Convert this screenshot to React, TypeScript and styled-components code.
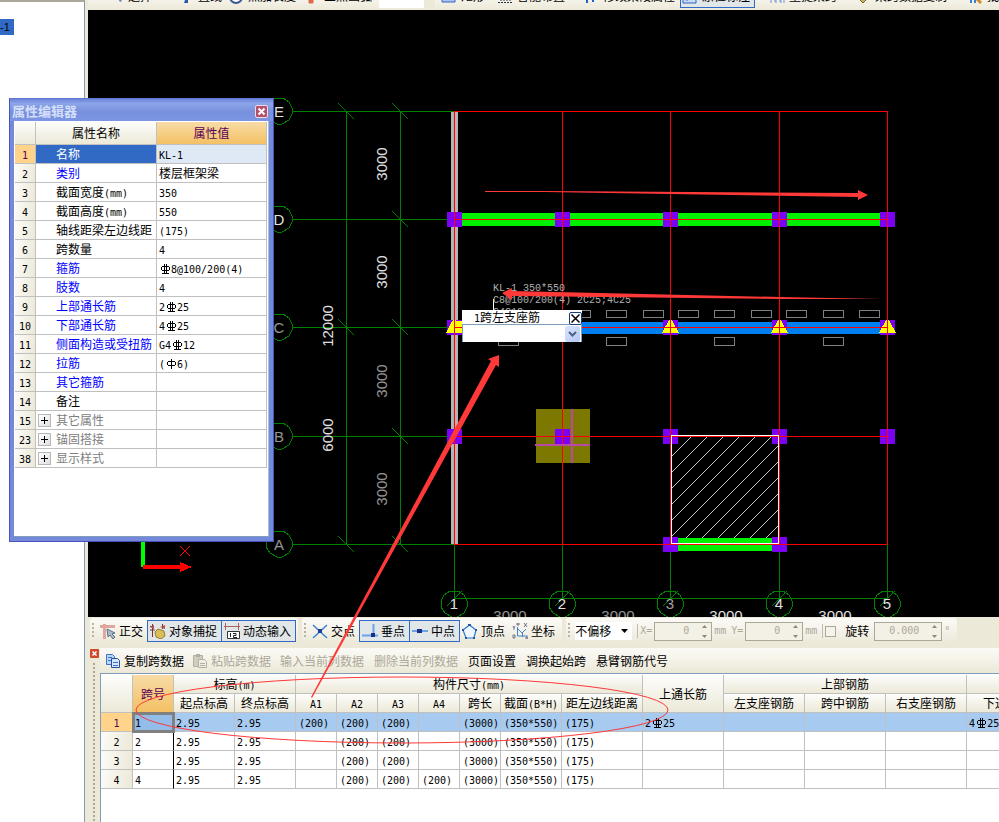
import React from 'react';
import styled, { createGlobalStyle, css } from 'styled-components';

const GlobalStyle = createGlobalStyle`
  * { box-sizing: border-box; }
  body {
    margin: 0;
    background: #ece9d8;
    color: #000;
    font: 12px/18px "Noto Sans CJK SC", "Liberation Sans", sans-serif;
  }
  button, input, select { font: inherit; color: inherit; margin: 0; }
`;

const LINE = '#c0c0c0';
const CHROME = 'linear-gradient(#fbfaf6, #f4f2e8 50%, #ebe8d7)';

/* ---------- text helpers ---------- */

const Latin = styled.span`
  font-family: "DejaVu Sans Mono", monospace;
  font-size: 10px;
  line-height: 0;
  white-space: pre;
`;

const Glyph = styled.svg`
  width: 12px;
  height: 12px;
  vertical-align: -2px;
  fill: none;
  stroke: currentColor;
  shape-rendering: crispEdges;
`;

const Rebar = ({ grade }: { grade: 'A' | 'C' }) => (
  <Glyph viewBox="0 0 12 12" role="img" aria-label={grade === 'C' ? 'HRB400' : 'HPB300'}>
    {grade === 'C' ? (
      <path d="M3 3.500h7M3 7.500h7M2.500 4v3M10.500 4v3M5.500 1v10M7.500 1v10M3 10.500h7" />
    ) : (
      <path d="M3 3.500h7M3 7.500h7M2.500 4v3M10.500 4v3M6.500 1v10" />
    )}
  </Glyph>
);

/* "#" marks a grade C bar, "~" a grade A bar. */
const Txt = ({ children }: { children: string }) => (
  <>
    {(children.match(/[#~]|[\x20-\x22\x24-\x7d]+|[^\x20-\x7e]+/g) || []).map((part, i) => {
      if (part === '#') return <Rebar key={i} grade="C" />;
      if (part === '~') return <Rebar key={i} grade="A" />;
      return /^[\x20-\x7e]/.test(part) ? <Latin key={i}>{part}</Latin> : <span key={i}>{part}</span>;
    })}
  </>
);

/* ---------- page frame ---------- */

const Page = styled.div`
  position: relative;
  display: flex;
  min-height: 100vh;
  overflow: hidden;
`;

const TreePane = styled.aside`
  flex: 0 0 85px;
  padding-top: 17px;
  background: #fff;
  border-top: 2px solid #aca899;
  border-right: 1px solid #7f9db9;
`;

const TreeItem = styled.button`
  display: block;
  width: 14px;
  height: 16px;
  padding: 0;
  border: 0;
  background: #316ac5;
  font: 11px/16px "Liberation Sans", sans-serif;
  text-align: left;
`;

const Main = styled.main`
  display: flex;
  flex: 1;
  flex-direction: column;
  min-width: 0;
  margin-left: 3px;
`;

/* ---------- top tool bar ---------- */

const TopBar = styled.div`
  display: flex;
  align-items: flex-end;
  height: 10px;
  padding: 0 0 2px 18px;
  overflow: hidden;
  background: linear-gradient(#f5f3e9, #ece9d8);
`;

const TopButton = styled.button<{ $w: number; $on?: boolean }>`
  display: flex;
  flex: 0 0 ${p => p.$w}px;
  align-items: center;
  gap: 4px;
  height: 20px;
  margin-right: ${p => (p.$on ? 12 : 0)}px;
  padding: 0 0 4px 1px;
  border: 1px solid ${p => (p.$on ? '#316ac5' : 'transparent')};
  background: ${p => (p.$on ? '#e1e6e8' : 'transparent')};
  white-space: nowrap;
`;

const TopField = styled.input`
  flex: 0 0 56px;
  width: 56px;
  height: 20px;
  margin-right: 4px;
  border: 0;
  border-right: 11px solid #ece9d8;
  background: #fff;
`;

const SmallIcon = styled.svg`
  flex: none;
  width: 16px;
  height: 16px;
  fill: none;
`;

const topItems = [
  { label: '选择', w: 70, icon: <path d="M6 3v9l3-3 3 5 2-1-3-4h4z" fill="#6f86b5" /> },
  { label: '直线', w: 50, icon: <path d="M5 3h8l-3 6v6H6l2-6z" fill="#2b58b0" /> },
  { label: '点加长度', w: 76, icon: <><circle cx="8" cy="9" r="6" fill="#fff" stroke="#3b5a92" strokeWidth="2" /><path d="M8 5v7" stroke="#222" /></> },
  { label: '三点画弧', w: 77, icon: <path d="M6 8v3M5 12h4v3H5z" stroke="#e0674c" fill="#e0674c" /> },
];

const topItemsAfter = [
  { label: '矩形', w: 56, icon: <path d="M1 3h13v11H1z" fill="#a9c4f5" stroke="#3a5fcd" /> },
  { label: '智能布置', w: 86, icon: <path d="M2 3h12v9H2zM1 14.500h14" fill="#b5d0f0" stroke="#234" strokeDasharray="2 1" /> },
  { label: '修改梁段属性', w: 99, icon: <path d="M4 2v13M4 10h7M10 3v11" stroke="#1f62c4" strokeWidth="2" /> },
  { label: '原位标注', w: 75, on: true, icon: <path d="M1 2h13v13H1zM5 6v7M9 9h4" fill="#c6dbf7" stroke="#3566b8" /> },
  { label: '重提梁跨', w: 86, icon: <path d="M2 15V5h4v9M7 15V5h4v9M12 15V5h3v10" stroke="#6c93d6" /> },
  { label: '梁跨数据复制', w: 112, icon: <path d="M3 10l5 5 5-5-5-6z" fill="#c6b35d" stroke="#77692c" /> },
  { label: '批量', w: 60, icon: <><path d="M1 11h10M4 8v7M8 8v7" stroke="#3a80d0" strokeWidth="2" /><path d="M9 10l5 5" stroke="#d68a30" strokeWidth="3" /></> },
];

/* ---------- drawing canvas ---------- */

const CanvasArea = styled.section`
  position: relative;
  overflow: hidden;
  background: #000;
`;

const Drawing = styled.svg`
  display: block;
  width: 911px;
  height: 607px;
  shape-rendering: crispEdges;
  fill: none;
  text {
    fill: #e0e0e0;
    font-family: "Liberation Sans", sans-serif;
    font-size: 15px;
    text-anchor: middle;
  }
`;

const axisX = [454, 562, 670, 779, 887];
const axisY = [111, 219, 327, 436, 544];
const letters = ['E', 'D', 'C', 'B', 'A'];
const columns: [number, number][] = [
  [454, 219], [562, 219], [670, 219], [779, 219], [887, 219],
  [454, 327], [670, 327], [779, 327], [887, 327],
  [454, 436], [562, 436], [670, 436], [779, 436], [887, 436],
  [670, 544], [779, 544],
];
const hatch = Array.from({ length: 12 }, (_, k) => {
  const s = 1128 + 16 * k;
  const y1 = Math.min(538, s - 671);
  const y2 = Math.max(437, s - 778);
  return `M${s - y1} ${y1}L${s - y2} ${y2}`;
}).join('');

const ring = (cx: number, cy: number) =>
  `M${cx - 4} ${cy - 13}h8l6 4 3 6v6l-3 6-7 4h-5l-7-4-4-6v-6l3-6z`;

const Plan = () => (
  <Drawing viewBox="88 10 911 607" role="img" aria-label="梁平面图">
    <g stroke="#008000">
      {axisY.map(y => <path key={y} d={`M292 ${y + 0.5}H454`} />)}
      <path d="M346.500 111V544M400.500 111V544M454 598.500H887" />
      {axisX.map(x => <path key={x} d={`M${x + 0.5} 544V598`} />)}
      {[111, 327, 544].map(y => <path key={y} d={`M338 ${y - 8}l16 16`} />)}
      {axisY.map(y => <path key={y} d={`M392 ${y - 8}l16 16`} />)}
      {axisX.map(x => <path key={x} d={`M${x - 7} 606l15-15`} />)}
      {axisY.map(y => <path key={y} d={ring(279, y)} />)}
      {axisX.map(x => <path key={x} d={ring(x, 604)} />)}
    </g>
    <rect x="451" y="112" width="7" height="432" fill="#b4b4b4" />
    <rect x="454" y="213" width="433" height="13" fill="#00f000" />
    <rect x="454" y="322" width="433" height="12" fill="#0080f0" />
    <rect x="678" y="538" width="94" height="13" fill="#00f000" />
    <rect x="536" y="409" width="54" height="54" fill="#7c7800" />
    <g fill="#7c00f4">
      {columns.map(([x, y]) => <rect key={`${x}-${y}`} x={x - 7} y={y - 7} width="15" height="15" />)}
    </g>
    <path d={hatch} stroke="#c8c8c8" />
    <g stroke="#808080">
      {[462, 570, 606, 643, 678, 714, 751, 786, 823, 859].map(x => (
        <rect key={x} x={x + 0.5} y="310.500" width="20" height="7" />
      ))}
      {[498, 606, 714, 823].map(x => <rect key={x} x={x + 0.5} y="337.500" width="20" height="8" />)}
    </g>
    <g fill="#ff0">
      {axisX.filter(x => x !== 562).map(x => <path key={x} d={`M${x - 1} 320h3l7 13h-17z`} />)}
      <path d="M446 333l6-12h12v12z" />
    </g>
    <g stroke="#f00">
      {axisX.map(x => <path key={x} d={`M${x + 0.5} 111V544`} />)}
      {axisY.map(y => <path key={y} d={`M454 ${y + 0.5}H887`} />)}
    </g>
    <path d="M671.500 435.500H778.500V543.500H671.500z" stroke="#fff" />
    <path d="M571 409h2v54h-2zM535 444h55v2h-55z" fill="#b84aa4" />
    <path d="M141 500h4v67h-4z" fill="#0f0" />
    <path d="M143 565h37v-3l12 5-12 5v-3h-37z" fill="#f00" />
    <path d="M180 546l10 10M190 546l-10 10" stroke="#f00" shapeRendering="auto" />
    {letters.map((l, i) => (
      <text key={l} x="279" y={axisY[i] + 6} opacity={i > 1 ? 0.65 : 1}>{l}</text>
    ))}
    {axisX.map((x, i) => <text key={x} x={x} y="609" opacity={i === 2 ? 0.7 : 1}>{i + 1}</text>)}
    {axisX.slice(0, 4).map((x, i) => (
      <text key={x} x={x + 56} y="621" opacity={i < 2 ? 0.65 : 1}>3000</text>
    ))}
    {[164, 272, 381, 489].map((y, i) => (
      <text key={y} transform={`translate(387 ${y}) rotate(-90)`} opacity={i > 1 ? 0.65 : 1}>3000</text>
    ))}
    <text transform="translate(333 326) rotate(-90)">12000</text>
    <text transform="translate(333 435) rotate(-90)">6000</text>
    <path d="M493.500 299v14" stroke="#fff" />
  </Drawing>
);

const BeamNote = styled.div`
  position: absolute;
  top: 273px;
  left: 405px;
  color: #b0b0b0;
  font: 10px/12px "Liberation Mono", monospace;
  white-space: pre;
`;

const SupportPopup = styled.div`
  position: absolute;
  top: 300px;
  left: 374px;
  width: 120px;
  height: 32px;
  background: #fff;
`;

const PopupHead = styled.div`
  display: flex;
  align-items: center;
  justify-content: space-between;
  height: 14px;
  padding-left: 12px;
  line-height: 14px;
`;

const PopupClose = styled.button`
  width: 13px;
  height: 13px;
  margin-top: 2px;
  padding: 0;
  border: 1px solid #1c3c78;
  border-radius: 2px;
  background: #fff;
  svg { display: block; width: 11px; height: 11px; }
`;

const PopupCombo = styled.div`
  display: flex;
  align-items: stretch;
  height: 18px;
  padding: 1px 1px 0 0;
  border: 1px solid #7f9db9;
  border-bottom: 0;
`;

const PopupSelect = styled.select`
  flex: 1;
  min-width: 0;
  border: 0;
  background: #fff;
  appearance: none;
`;

const ComboArrow = styled.svg`
  flex: none;
  width: 15px;
  height: 16px;
  border-radius: 2px;
  background: linear-gradient(135deg, #dbe5fd, #b4c8f6);
`;

/* ---------- property editor ---------- */

const PropWindow = styled.section`
  position: absolute;
  top: 98px;
  left: 9px;
  display: flex;
  flex-direction: column;
  width: 265px;
  height: 444px;
  padding: 0 4px 4px;
  border: 1px solid #4a54b8;
  border-top-color: #6078d0;
  background: #7488dc;
`;

const PropTitle = styled.header`
  display: flex;
  align-items: center;
  justify-content: space-between;
  height: 22px;
  margin: 0 -4px;
  padding: 2px 5px 0 2px;
  background: linear-gradient(#6a84d8, #8ca4e8 20%, #7890dc 60%, #7c96e4);
  color: #d4dffa;
  font-size: 13px;
  font-weight: 700;
`;

const PropClose = styled.button`
  width: 13px;
  height: 13px;
  padding: 0;
  border: 1px solid #f0d8e4;
  border-radius: 2px;
  background: #b4506c;
  svg { display: block; width: 11px; height: 11px; }
`;

const PropBody = styled.div`
  flex: 1;
  padding: 1px 1px 0;
  border-right: 1px solid #a9c0dc;
  border-bottom: 1px solid #7f9db9;
  background: #fff;
`;

const GridTable = styled.table`
  border-collapse: separate;
  border-spacing: 0;
  table-layout: fixed;
`;

const PropTable = styled(GridTable)`
  width: 252px;
`;

const cell = css`
  height: 19px;
  padding: 0;
  border-right: 1px solid ${LINE};
  border-bottom: 1px solid ${LINE};
  line-height: 16px;
  font-weight: 400;
  white-space: nowrap;
`;

const HeadCell = styled.th<{ $hot?: boolean; $tall?: boolean }>`
  ${cell}
  height: ${p => (p.$tall ? 23 : 19)}px;
  background: ${p => (p.$hot ? 'linear-gradient(#f7dca6, #f4c064)' : 'linear-gradient(#fdfdfb, #ece9d8)')};
  color: ${p => (p.$hot ? '#5a0058' : '#000')};
  text-align: center;
`;

const RowHead = styled.th<{ $hot?: boolean }>`
  ${cell}
  background: ${p => (p.$hot ? '#ffd48a' : 'linear-gradient(100deg, #fcfbf7, #ece9d8)')};
  color: ${p => (p.$hot ? '#5a0058' : '#000')};
  text-align: center;
`;

type Tone = 'selected' | 'blue' | 'gray' | 'plain';

const PropName = styled.td<{ $tone: Tone }>`
  ${cell}
  padding-left: 20px;
  background: ${p => (p.$tone === 'selected' ? '#316ac5' : '#fff')};
  color: ${p => ({ selected: '#fff', blue: '#0000ff', gray: '#808080', plain: '#000' })[p.$tone]};
`;

const GroupLine = styled.span`
  display: flex;
  align-items: center;
  gap: 5px;
  margin-left: -18px;
`;

const Expander = styled.button`
  width: 13px;
  height: 13px;
  padding: 0;
  border: 1px solid #b8b8b8;
  background: linear-gradient(135deg, #fff, #e0e0e0);
  svg { display: block; width: 11px; height: 11px; }
`;

const PropValue = styled.td<{ $on?: boolean }>`
  ${cell}
  padding-left: 2px;
  background: ${p => (p.$on ? '#dfe9f5' : '#fff')};
`;

const props: [string, string, string, Tone][] = [
  ['1', '名称', 'KL-1', 'selected'],
  ['2', '类别', '楼层框架梁', 'blue'],
  ['3', '截面宽度(mm)', '350', 'plain'],
  ['4', '截面高度(mm)', '550', 'plain'],
  ['5', '轴线距梁左边线距', '(175)', 'plain'],
  ['6', '跨数量', '4', 'plain'],
  ['7', '箍筋', '#8@100/200(4)', 'blue'],
  ['8', '肢数', '4', 'blue'],
  ['9', '上部通长筋', '2#25', 'blue'],
  ['10', '下部通长筋', '4#25', 'blue'],
  ['11', '侧面构造或受扭筋', 'G4#12', 'blue'],
  ['12', '拉筋', '(~6)', 'blue'],
  ['13', '其它箍筋', '', 'blue'],
  ['14', '备注', '', 'plain'],
  ['15', '其它属性', '', 'gray'],
  ['23', '锚固搭接', '', 'gray'],
  ['38', '显示样式', '', 'gray'],
];

const PropertyEditor = () => (
  <PropWindow aria-label="属性编辑器">
    <PropTitle>
      属性编辑器
      <PropClose aria-label="关闭">
        <svg viewBox="0 0 11 11"><path d="M2.500 2.500l6 6M8.500 2.500l-6 6" stroke="#fff" strokeWidth="2" /></svg>
      </PropClose>
    </PropTitle>
    <PropBody>
      <PropTable>
        <colgroup><col width="21" /><col width="121" /><col width="110" /></colgroup>
        <thead>
          <tr><HeadCell $tall /><HeadCell $tall>属性名称</HeadCell><HeadCell $tall $hot>属性值</HeadCell></tr>
        </thead>
        <tbody>
          {props.map(([no, name, value, tone]) => (
            <tr key={no}>
              <RowHead $hot={tone === 'selected'}><Txt>{no}</Txt></RowHead>
              <PropName $tone={tone}>
                {tone === 'gray' ? (
                  <GroupLine>
                    <Expander aria-label={`展开${name}`}>
                      <svg viewBox="0 0 11 11"><path d="M2 5.500h7M5.500 2v7" stroke="#000" /></svg>
                    </Expander>
                    {name}
                  </GroupLine>
                ) : (
                  <Txt>{name}</Txt>
                )}
              </PropName>
              <PropValue $on={tone === 'selected'}><Txt>{value}</Txt></PropValue>
            </tr>
          ))}
        </tbody>
      </PropTable>
    </PropBody>
  </PropWindow>
);

/* ---------- snap tool bar ---------- */

const SnapRow = styled.div`
  display: flex;
  align-items: flex-start;
  gap: 4px;
  height: 31px;
  padding: 1px 0 0 2px;
  background: #ece9d8;
`;

const Strip = styled.div`
  display: flex;
  flex: none;
  align-items: center;
  height: 26px;
  padding: 0 2px 0 2px;
  border-radius: 3px;
  background: ${CHROME};
`;

const Grip = styled.i`
  flex: none;
  width: 2px;
  height: 16px;
  margin-right: 3px;
  background: repeating-linear-gradient(#b8b4a0 0 2px, transparent 2px 4px);
`;

const SnapButton = styled.button<{ $on?: boolean }>`
  display: flex;
  align-items: center;
  gap: 3px;
  height: 22px;
  padding: 0 4px 0 2px;
  border: 1px solid ${p => (p.$on ? '#316ac5' : 'transparent')};
  background: ${p => (p.$on ? '#e1e6e8' : 'transparent')};
  white-space: nowrap;
  & + & { margin-left: ${p => (p.$on ? -1 : 1)}px; }
`;

const OffsetBox = styled.label`
  display: flex;
  align-items: center;
  width: 57px;
  height: 18px;
  margin: 0 5px 0 2px;
  padding-right: 4px;
  background: #fff;
  svg { width: 7px; height: 4px; }
`;

const OffsetSelect = styled.select`
  flex: 1;
  min-width: 0;
  padding: 0;
  border: 0;
  background: transparent;
  appearance: none;
`;

const Bar = styled.i`
  width: 1px;
  height: 14px;
  margin-right: 2px;
  background: #c0bca8;
`;

const Dim = styled.label`
  display: flex;
  align-items: center;
  gap: 2px;
  margin-right: 5px;
  color: #aca899;
`;

const Spin = styled.span<{ $w: number }>`
  display: flex;
  align-items: center;
  width: ${p => p.$w}px;
  height: 19px;
  padding-right: 3px;
  border: 1px solid #aca899;
  background: #f3f1e6;
  input {
    flex: 1;
    min-width: 0;
    padding: 0 12px 0 0;
    border: 0;
    background: transparent;
    color: #aca899;
    font: 10px/16px "DejaVu Sans Mono", monospace;
    text-align: right;
  }
  svg { width: 7px; height: 15px; }
`;

const SpinBox = ({ value, w, label }: { value: string; w: number; label: string }) => (
  <Spin $w={w}>
    <input aria-label={label} defaultValue={value} disabled />
    <svg viewBox="0 0 7 15"><path d="M1 4h5L3.500 1zM1 11h5l-2.500 3z" fill="#8c8878" /></svg>
  </Spin>
);

const CheckLabel = styled.label`
  display: flex;
  align-items: center;
  gap: 9px;
  margin: 0 5px 0 0;
  input {
    width: 11px;
    height: 11px;
    border: 1px solid #aca899;
    background: #f6f4ea;
    appearance: none;
  }
`;

const icons = {
  ortho: <path d="M4.500 1v15M0 3.500h15" stroke="#dfa7a0" strokeWidth="3" />,
  orthoArrow: <path d="M7 6l1 8 2-2 3 4 2-2-3-3 3-1z" fill="#a9bac9" stroke="#5b7086" />,
  snap: <><path d="M2.500 1v13M12.500 1v5M0 3.500h3M0 7h5" stroke="#7b3030" /><path d="M0 4l4-2v4zM10 4l5-2v4z" fill="#b05050" /><path d="M5 9l3-3 6 2 1 5-4 3-5-2z" fill="#d8bd58" stroke="#9a8030" /></>,
  dyn: <><path d="M0 3.500h16M1.500 0v7M14.500 0v7" stroke="#b06060" /><path d="M3.500 8.500h12v7h-12z" fill="#fff" stroke="#333" /><path d="M6.500 10v4M9 10.500h3v2H9.500v2H13" stroke="#222" /></>,
  cross: <><path d="M1 2l14 13M15 2L1 15" stroke="#3d82cc" strokeWidth="1.500" /><path d="M6 6h4v4H6z" fill="#1c3f9c" /></>,
  perp: <><path d="M11.500 1v11M0 12.500h16" stroke="#6aa4e6" strokeWidth="2" /><path d="M9 10h4v4H9z" fill="#1a2f88" /></>,
  mid: <><path d="M0 8h16" stroke="#6aa4e6" strokeWidth="2" /><path d="M5 6h5v4H5z" fill="#1a2f88" /></>,
  vertex: <><path d="M7.500 2L14 7l-2 8H4L1 7z" fill="#eef6ff" stroke="#2d78c8" strokeWidth="1.200" /><path d="M6 1h3v2H6zM0 6h2v2H0zM13 6h2v2h-2zM3 14h2v2H3zM11 14h2v2h-2z" fill="#2457a8" /></>,
  coord: <><path d="M5.500 4v9h10M6 6l4 4 4-4M10.500 10v4" stroke="#3d82cc" /><path d="M1 3l1 2 1-2M2 5v2M12 0l3 4M15 0l-3 4M5 0h2v2H5zM1 12h2v3H1zM14 14h2v2h-2z" stroke="#557" strokeWidth="0.800" /></>,
  copy: <><path d="M1.500 1.500h6l2 2v8h-8z" fill="#b8d4ff" stroke="#3f74c4" /><path d="M3 4.500h4M3 7.500h3" stroke="#3f74c4" /><path d="M6.500 5.500h6l2 2v7h-8z" fill="#d4e6ff" stroke="#274f9c" /><path d="M8 9.500h5M8 12.500h5" stroke="#3f74c4" /></>,
  paste: <><path d="M1.500 2.500h9v11h-9z" fill="#cfccc0" stroke="#b4b0a0" /><path d="M4 1h4v3H4z" fill="#b4b0a0" /><path d="M6.500 6.500h6l2 2v6h-8z" fill="#f0eee4" stroke="#b4b0a0" /><path d="M8 10.500h5M8 12.500h5" stroke="#b4b0a0" /></>,
};
const Icon = ({ children }: { children: React.ReactNode }) => (
  <SmallIcon viewBox="0 0 16 16" aria-hidden="true">{children}</SmallIcon>
);

/* ---------- data panel ---------- */

const DataPanel = styled.section`
  display: flex;
  flex: 1;
  min-height: 174px;
`;

const DockHandle = styled.div`
  display: flex;
  flex: 0 0 12px;
  flex-direction: column;
  align-items: center;
  gap: 5px;
  padding-top: 1px;
`;

const DockClose = styled.button`
  width: 9px;
  height: 9px;
  padding: 0;
  border: 0;
  border-radius: 1px;
  background: #d0482c;
  svg { display: block; width: 9px; height: 9px; }
`;

const DockDots = styled.i`
  flex: 1;
  width: 2px;
  background: repeating-linear-gradient(#aca899 0 2px, transparent 2px 4px);
`;

const DataColumn = styled.div`
  display: flex;
  flex: 1;
  flex-direction: column;
  min-width: 0;
`;

const DataBar = styled.div`
  display: flex;
  align-items: center;
  gap: 8px;
  height: 25px;
  padding-left: 5px;
  background: ${CHROME};
`;

const DataButton = styled.button<{ $icon?: boolean }>`
  display: flex;
  align-items: center;
  gap: 3px;
  padding: 0 ${p => (p.$icon ? 0 : 1)}px;
  border: 0;
  background: transparent;
  line-height: 16px;
  white-space: nowrap;
  &:disabled { color: #aca899; }
`;

const SheetFrame = styled.div`
  flex: 1;
  padding-top: 1px;
  overflow: hidden;
  border-top: 1px solid #7f9db9;
  border-left: 1px solid #7f9db9;
  background: #fff;
`;

const Sheet = styled(GridTable)`
  width: 1109px;
`;

const SheetCell = styled.td<{ $row: boolean; $pad: number; $mark?: boolean }>`
  ${cell}
  padding-left: ${p => p.$pad}px;
  background: ${p => (p.$row ? '#a6caf0' : '#fff')};
  ${p => p.$mark && (p.$row
    ? css`background: #94bce9; outline: 3px solid #808080; outline-offset: -2px;`
    : css`border-right-color: #000;`)}
`;

const colWidths = [32, 41, 61, 61, 41, 41, 41, 41, 41, 61, 81, 81, 81, 81, 81, 81, 81, 81];
const rows = [
  ['1', '2.95', '2.95', '(200)', '(200)', '(200)', '', '(3000)', '(350*550)', '(175)', '2#25', '', '', '', '4#25', '', ''],
  ['2', '2.95', '2.95', '', '(200)', '(200)', '', '(3000)', '(350*550)', '(175)', '', '', '', '', '', '', ''],
  ['3', '2.95', '2.95', '', '(200)', '(200)', '', '(3000)', '(350*550)', '(175)', '', '', '', '', '', '', ''],
  ['4', '2.95', '2.95', '', '(200)', '(200)', '(200)', '(3000)', '(350*550)', '(175)', '', '', '', '', '', '', ''],
];
const subHeads = ['起点标高', '终点标高', 'A1', 'A2', 'A3', 'A4', '跨长', '截面(B*H)', '距左边线距离', '左支座钢筋', '跨中钢筋', '右支座钢筋', '下通长筋', '左支座', '跨中'];

const Annotations = styled.svg`
  position: absolute;
  top: 0;
  left: 0;
  width: 999px;
  height: 822px;
  pointer-events: none;
`;

export default function App() {
  return (
    <Page>
      <GlobalStyle />
      <TreePane><TreeItem>-1</TreeItem></TreePane>
      <Main>
        <TopBar>
          {topItems.map(t => <TopButton key={t.label} $w={t.w}><Icon>{t.icon}</Icon>{t.label}</TopButton>)}
          <TopField aria-label="半径" />
          {topItemsAfter.map(t => <TopButton key={t.label} $w={t.w} $on={t.on}><Icon>{t.icon}</Icon>{t.label}</TopButton>)}
        </TopBar>

        <CanvasArea>
          <Plan />
          <BeamNote>{'KL-1 350*550\nC8@100/200(4) 2C25;4C25\nG4C12'}</BeamNote>
          <SupportPopup>
            <PopupHead>
              <label htmlFor="support"><Txt>1跨左支座筋</Txt></label>
              <PopupClose aria-label="关闭">
                <svg viewBox="0 0 11 11"><path d="M1.500 1.500l8 8M9.500 1.500l-8 8" stroke="#000" strokeWidth="1.500" /></svg>
              </PopupClose>
            </PopupHead>
            <PopupCombo>
              <PopupSelect id="support"><option /></PopupSelect>
              <ComboArrow viewBox="0 0 15 16"><path d="M4 6l3.500 3.500L11 6" fill="none" stroke="#4d6185" strokeWidth="2" /></ComboArrow>
            </PopupCombo>
          </SupportPopup>
        </CanvasArea>

        <SnapRow>
          <Strip>
            <Grip />
            <SnapButton><Icon>{icons.ortho}{icons.orthoArrow}</Icon>正交</SnapButton>
            <SnapButton $on><Icon>{icons.snap}</Icon>对象捕捉</SnapButton>
            <SnapButton $on><Icon>{icons.dyn}</Icon>动态输入</SnapButton>
          </Strip>
          <Strip>
            <Grip />
            <SnapButton><Icon>{icons.cross}</Icon>交点</SnapButton>
            <SnapButton $on><Icon>{icons.perp}</Icon>垂点</SnapButton>
            <SnapButton $on><Icon>{icons.mid}</Icon>中点</SnapButton>
            <SnapButton><Icon>{icons.vertex}</Icon>顶点</SnapButton>
            <SnapButton><Icon>{icons.coord}</Icon>坐标</SnapButton>
          </Strip>
          <Strip>
            <Grip />
            <OffsetBox>
              <OffsetSelect aria-label="偏移方式"><option>不偏移</option></OffsetSelect>
              <svg viewBox="0 0 7 4"><path d="M0 0h7L3.500 4z" /></svg>
            </OffsetBox>
            <Bar />
            <Dim><Latin>X=</Latin><SpinBox value="0" w={58} label="X" /><Latin>mm</Latin></Dim>
            <Dim><Latin>Y=</Latin><SpinBox value="0" w={58} label="Y" /><Latin>mm</Latin></Dim>
            <Bar />
            <CheckLabel><input type="checkbox" disabled />旋转</CheckLabel>
            <Dim><SpinBox value="0.000" w={68} label="旋转角度" /><Latin>°</Latin></Dim>
          </Strip>
        </SnapRow>

        <DataPanel>
          <DockHandle>
            <DockClose aria-label="关闭">
              <svg viewBox="0 0 9 9"><path d="M2.500 2.500l4 4M6.500 2.500l-4 4" stroke="#fff" strokeWidth="1.500" /></svg>
            </DockClose>
            <DockDots />
          </DockHandle>
          <DataColumn>
            <DataBar>
              <DataButton $icon><Icon>{icons.copy}</Icon>复制跨数据</DataButton>
              <DataButton $icon disabled><Icon>{icons.paste}</Icon>粘贴跨数据</DataButton>
              <DataButton disabled>输入当前列数据</DataButton>
              <DataButton disabled>删除当前列数据</DataButton>
              <DataButton>页面设置</DataButton>
              <DataButton>调换起始跨</DataButton>
              <DataButton>悬臂钢筋代号</DataButton>
            </DataBar>
            <SheetFrame>
              <Sheet>
                <colgroup>{colWidths.map((w, i) => <col key={i} width={w} />)}</colgroup>
                <thead>
                  <tr>
                    <HeadCell rowSpan={2} />
                    <HeadCell rowSpan={2} $hot>跨号</HeadCell>
                    <HeadCell colSpan={2}><Txt>标高(m)</Txt></HeadCell>
                    <HeadCell colSpan={7}><Txt>构件尺寸(mm)</Txt></HeadCell>
                    <HeadCell rowSpan={2}>上通长筋</HeadCell>
                    <HeadCell colSpan={3}>上部钢筋</HeadCell>
                    <HeadCell colSpan={3}>下部钢筋</HeadCell>
                  </tr>
                  <tr>{subHeads.map(h => <HeadCell key={h}><Txt>{h}</Txt></HeadCell>)}</tr>
                </thead>
                <tbody>
                  {rows.map((r, ri) => (
                    <tr key={ri}>
                      <RowHead $hot={ri === 0}><Txt>{r[0]}</Txt></RowHead>
                      {r.map((v, ci) => (
                        <SheetCell key={ci} $row={ri === 0} $mark={ci === 0} $pad={v[0] === '(' ? 3 : 2}>
                          <Txt>{v}</Txt>
                        </SheetCell>
                      ))}
                    </tr>
                  ))}
                </tbody>
              </Sheet>
            </SheetFrame>
          </DataColumn>
        </DataPanel>
      </Main>

      <PropertyEditor />

      <Annotations viewBox="0 0 999 822" aria-hidden="true">
        <g fill="#ff3838">
          <path d="M485 191h60l313 2v-3l10 5-10 5v-3l-313-5h-60z" />
          <path d="M882 299L780 297 512 291v-3l-10 5 10 7v-4l268 3z" />
          <path d="M311 697L491 361l-3-2 11-4v12l-3-2L312 698z" />
        </g>
        <ellipse cx="402" cy="710" rx="266" ry="33" fill="none" stroke="#ff3838" />
      </Annotations>
    </Page>
  );
}
